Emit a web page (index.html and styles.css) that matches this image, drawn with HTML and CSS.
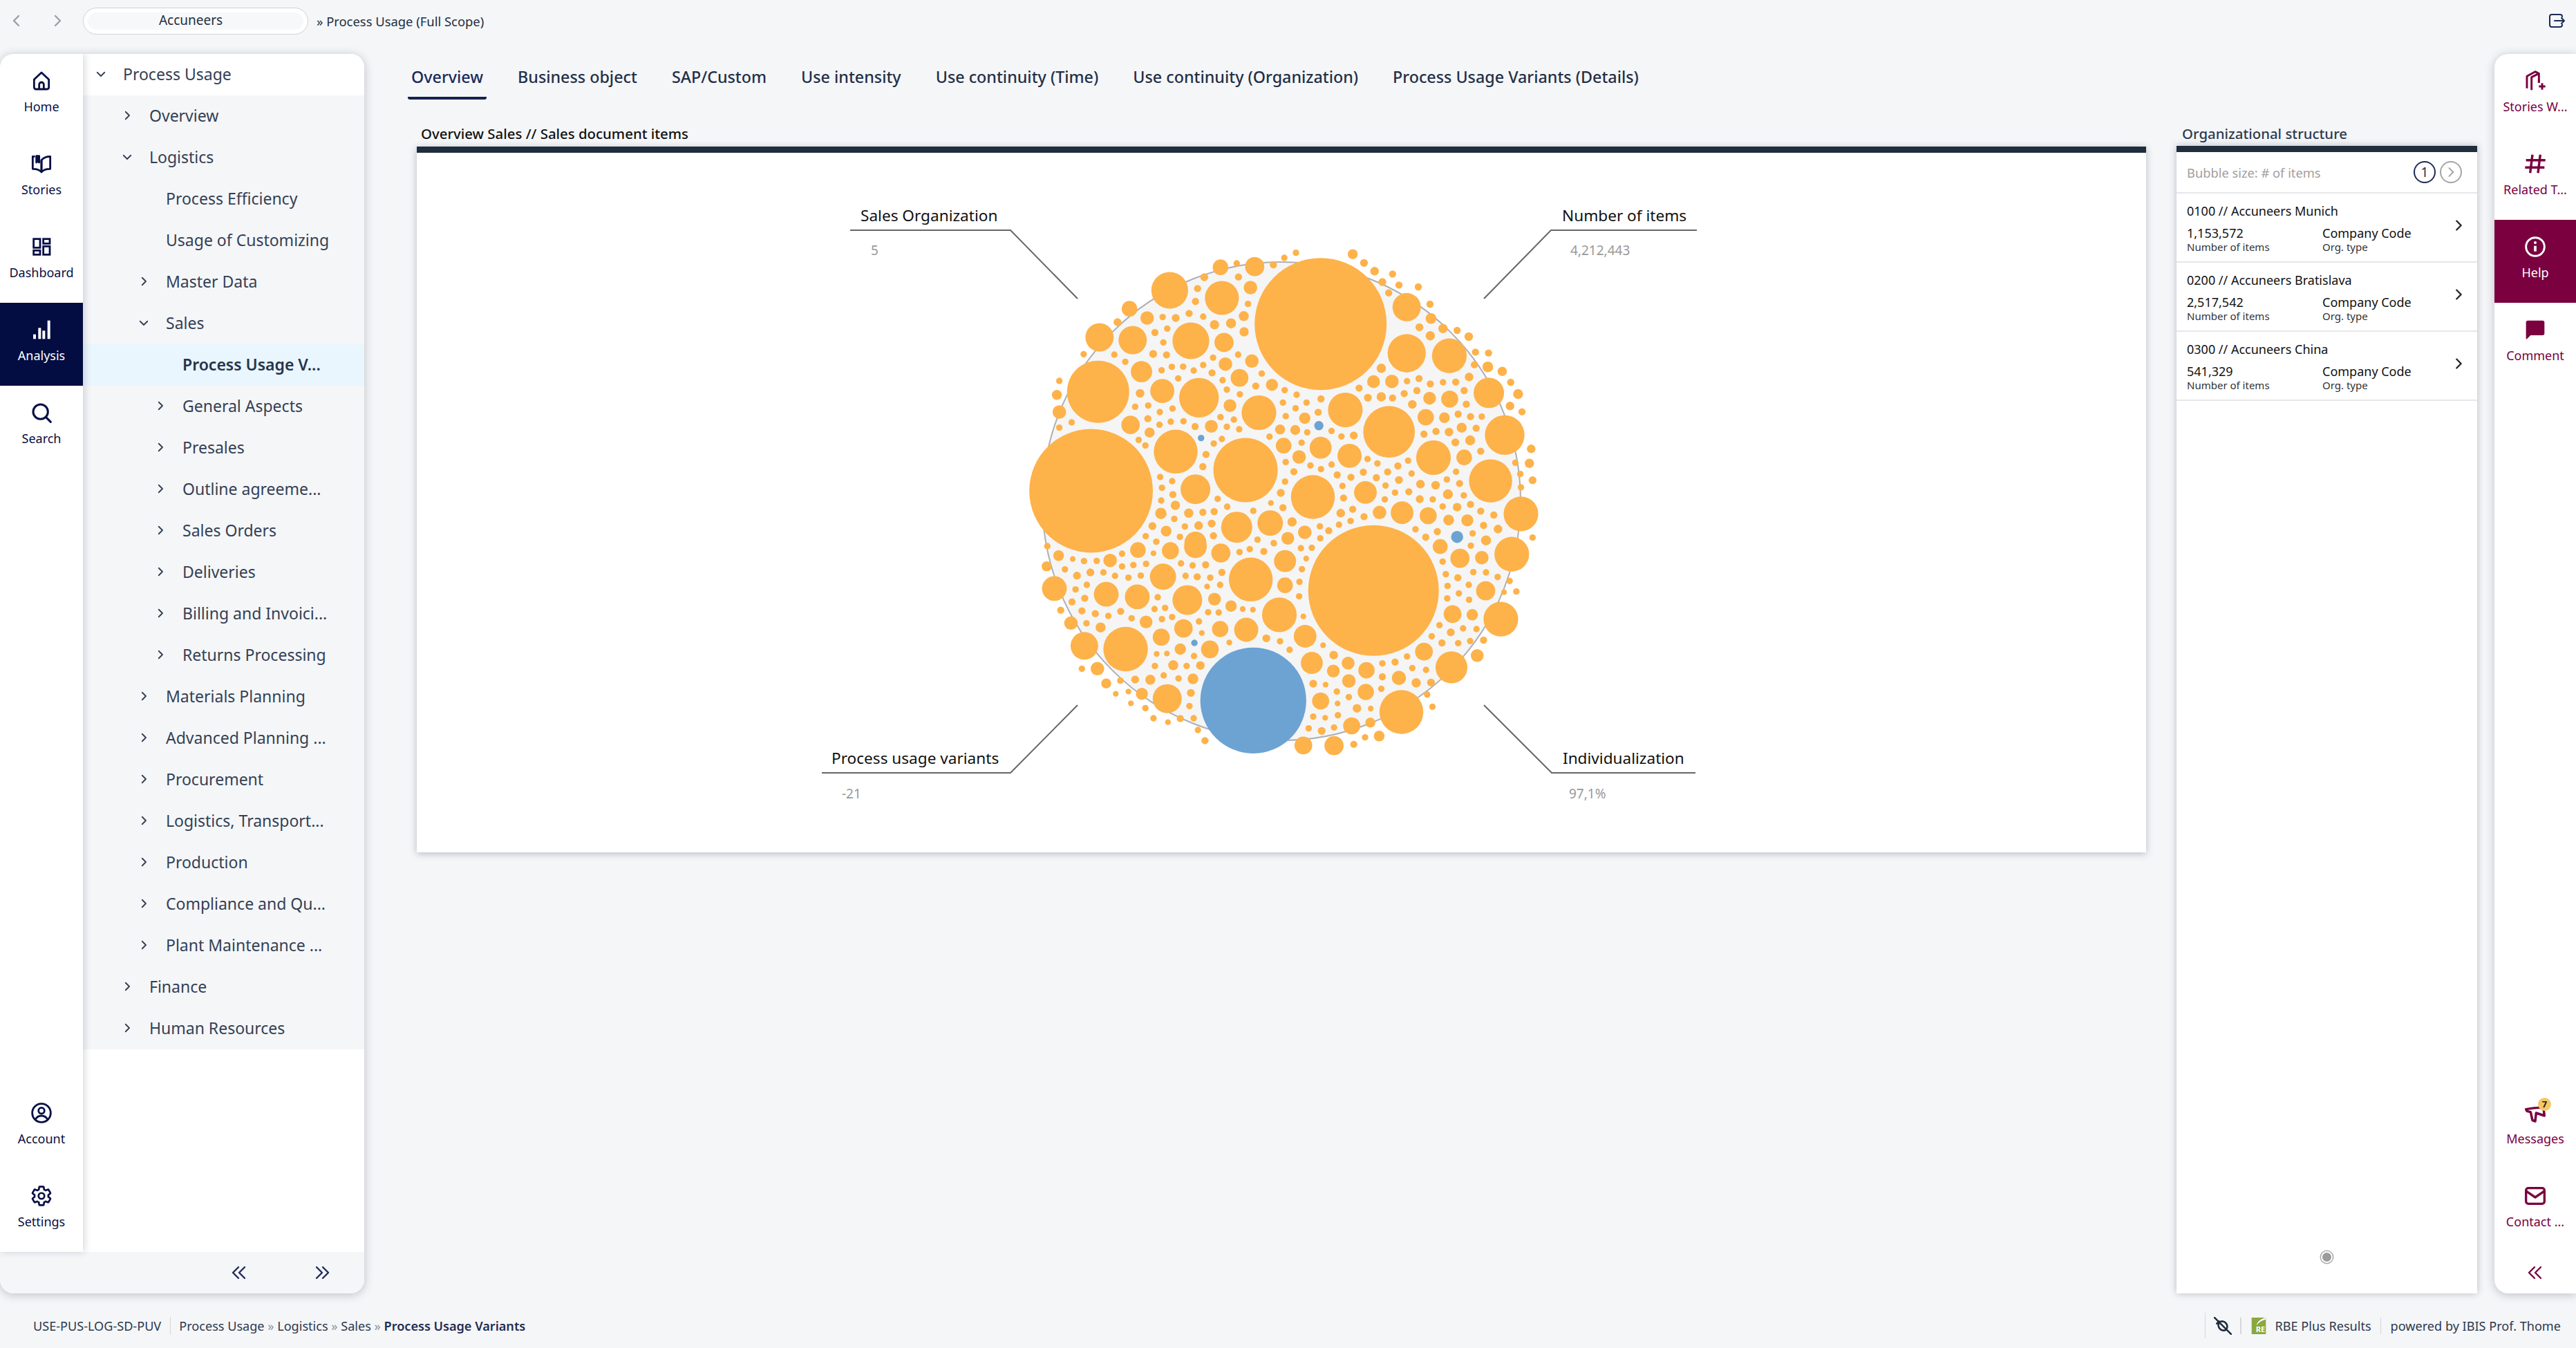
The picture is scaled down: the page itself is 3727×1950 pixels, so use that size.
FILE: index.html
```html
<!DOCTYPE html>
<html lang="en">
<head>
    <meta charset="UTF-8">
    <title>Process Usage Variants</title>
    <link rel="stylesheet" href="styles.css">
</head>
<body>
    <svg class="sprites" width="0" height="0">
        <symbol id="chev-right" viewBox="0 0 24 24"><path d="M9 5l7 7-7 7" fill="none" stroke="currentColor" stroke-width="2.4" stroke-linecap="round" stroke-linejoin="round"/></symbol>
        <symbol id="chev-left" viewBox="0 0 24 24"><path d="M15 5l-7 7 7 7" fill="none" stroke="currentColor" stroke-width="2.4" stroke-linecap="round" stroke-linejoin="round"/></symbol>
        <symbol id="chev-down" viewBox="0 0 24 24"><path d="M5 9l7 7 7-7" fill="none" stroke="currentColor" stroke-width="2.4" stroke-linecap="round" stroke-linejoin="round"/></symbol>
        <symbol id="double-left" viewBox="0 0 24 24"><path d="M11 4l-8 8 8 8M20 4l-8 8 8 8" fill="none" stroke="currentColor" stroke-width="2.4" stroke-linecap="round" stroke-linejoin="round"/></symbol>
        <symbol id="double-right" viewBox="0 0 24 24"><path d="M4 4l8 8-8 8M13 4l8 8-8 8" fill="none" stroke="currentColor" stroke-width="2.4" stroke-linecap="round" stroke-linejoin="round"/></symbol>
    </svg>

    <header class="topbar">
        <svg class="top-chev"><use href="#chev-left"/></svg>
        <svg class="top-chev top-chev-next"><use href="#chev-right"/></svg>
        <div class="client-pill">Accuneers</div>
        <div class="scope">» Process Usage (Full Scope)</div>
        <svg class="logout" viewBox="0 0 24 24" fill="none" stroke="currentColor" stroke-width="2" stroke-linecap="round" stroke-linejoin="round">
            <path d="M20 6.5V6a3 3 0 0 0-3-3H5a3 3 0 0 0-3 3v12a3 3 0 0 0 3 3h12a3 3 0 0 0 3-3v-.5"/>
            <path d="M9 12h14M19 8l4 4-4 4"/>
        </svg>
    </header>

    <main class="main">
        <section class="left-panel">
            <div class="left-body">
                <nav class="rail">
                    <a class="rail-item">
                        <svg class="rail-icon" viewBox="0 0 24 24" fill="none" stroke="currentColor" stroke-width="2.1" stroke-linejoin="round"><path d="M4 10.5 12 3l8 7.5V19a2 2 0 0 1-2 2H6a2 2 0 0 1-2-2z"/><path d="M9.5 21v-5a2.5 2.5 0 0 1 5 0v5"/></svg>
                        <span>Home</span>
                    </a>
                    <a class="rail-item">
                        <svg class="rail-icon" viewBox="0 0 24 24" fill="none" stroke="currentColor" stroke-width="2.1" stroke-linejoin="round"><path d="M12 21C10 18.5 7 17.5 2.5 17.5V4H5M12 21c2-2.500 5-3.500 9.500-3.500V4C17 4 14 5.500 12 8z"/><path d="M12 8v13"/><path d="M6.500 3.500h3v7l-1.500-1.200-1.500 1.200z" fill="currentColor"/></svg>
                        <span>Stories</span>
                    </a>
                    <a class="rail-item">
                        <svg class="rail-icon" viewBox="0 0 24 24" fill="none" stroke="currentColor" stroke-width="2.1"><rect x="3.500" y="3.500" width="7" height="9.500"/><rect x="14" y="3.500" width="7" height="5"/><rect x="3.500" y="16" width="7" height="4.500"/><rect x="14" y="11.500" width="7" height="9"/></svg>
                        <span>Dashboard</span>
                    </a>
                    <a class="rail-item rail-item-active">
                        <svg class="rail-icon" viewBox="0 0 24 24" fill="currentColor"><rect x="3" y="17" width="3" height="5"/><rect x="8.500" y="10" width="3" height="12"/><rect x="13" y="13" width="3" height="9"/><rect x="18.500" y="2" width="3" height="20"/></svg>
                        <span>Analysis</span>
                    </a>
                    <a class="rail-item">
                        <svg class="rail-icon" viewBox="0 0 24 24" fill="none" stroke="currentColor" stroke-width="2.300" stroke-linecap="round"><circle cx="11" cy="11" r="8"/><path d="M16.800 16.800 22 22"/></svg>
                        <span>Search</span>
                    </a>
                    <div class="rail-spacer"></div>
                    <a class="rail-item">
                        <svg class="rail-icon" viewBox="0 0 24 24" fill="none" stroke="currentColor" stroke-width="2.100"><circle cx="12" cy="12" r="10"/><circle cx="12" cy="9.500" r="3.200"/><path d="M5.500 19c1.500-3 4-4 6.500-4s5 1 6.500 4"/></svg>
                        <span>Account</span>
                    </a>
                    <a class="rail-item">
                        <svg class="rail-icon" viewBox="0 0 24 24" fill="none" stroke="currentColor" stroke-width="2"><path d="M19.430 12.980c.04-.32.07-.64.07-.98s-.03-.66-.07-.98l2.110-1.650c.19-.15.24-.42.12-.64l-2-3.460c-.12-.22-.39-.3-.61-.22l-2.490 1c-.52-.4-1.080-.73-1.690-.98l-.38-2.650C14.460 2.180 14.250 2 14 2h-4c-.25 0-.46.18-.49.42l-.38 2.650c-.61.25-1.170.59-1.690.98l-2.490-1c-.23-.09-.49 0-.61.22l-2 3.460c-.13.22-.07.49.12.64l2.110 1.650c-.04.32-.07.65-.07.98s.03.66.07.98l-2.110 1.650c-.19.15-.24.42-.12.64l2 3.460c.12.22.39.3.61.22l2.490-1c.52.4 1.080.73 1.690.98l.38 2.650c.03.24.24.42.49.42h4c.25 0 .46-.18.49-.42l.38-2.650c.61-.25 1.170-.59 1.690-.98l2.490 1c.23.09.49 0 .61-.22l2-3.460c.12-.22.07-.49-.12-.64l-2.110-1.650z"/><circle cx="12" cy="12" r="3.200"/></svg>
                        <span>Settings</span>
                    </a>
                </nav>

                <div class="tree-wrap">
                    <ul class="tree">
                        <li class="tree-row tree-root lvl0"><svg class="tree-chev"><use href="#chev-down"/></svg>Process Usage</li>
                        <li class="tree-row lvl1"><svg class="tree-chev"><use href="#chev-right"/></svg>Overview</li>
                        <li class="tree-row lvl1"><svg class="tree-chev"><use href="#chev-down"/></svg>Logistics</li>
                        <li class="tree-row lvl2">Process Efficiency</li>
                        <li class="tree-row lvl2">Usage of Customizing</li>
                        <li class="tree-row lvl2"><svg class="tree-chev"><use href="#chev-right"/></svg>Master Data</li>
                        <li class="tree-row lvl2"><svg class="tree-chev"><use href="#chev-down"/></svg>Sales</li>
                        <li class="tree-row lvl3 tree-selected">Process Usage V...</li>
                        <li class="tree-row lvl3"><svg class="tree-chev"><use href="#chev-right"/></svg>General Aspects</li>
                        <li class="tree-row lvl3"><svg class="tree-chev"><use href="#chev-right"/></svg>Presales</li>
                        <li class="tree-row lvl3"><svg class="tree-chev"><use href="#chev-right"/></svg>Outline agreeme...</li>
                        <li class="tree-row lvl3"><svg class="tree-chev"><use href="#chev-right"/></svg>Sales Orders</li>
                        <li class="tree-row lvl3"><svg class="tree-chev"><use href="#chev-right"/></svg>Deliveries</li>
                        <li class="tree-row lvl3"><svg class="tree-chev"><use href="#chev-right"/></svg>Billing and Invoici...</li>
                        <li class="tree-row lvl3"><svg class="tree-chev"><use href="#chev-right"/></svg>Returns Processing</li>
                        <li class="tree-row lvl2"><svg class="tree-chev"><use href="#chev-right"/></svg>Materials Planning</li>
                        <li class="tree-row lvl2"><svg class="tree-chev"><use href="#chev-right"/></svg>Advanced Planning ...</li>
                        <li class="tree-row lvl2"><svg class="tree-chev"><use href="#chev-right"/></svg>Procurement</li>
                        <li class="tree-row lvl2"><svg class="tree-chev"><use href="#chev-right"/></svg>Logistics, Transport...</li>
                        <li class="tree-row lvl2"><svg class="tree-chev"><use href="#chev-right"/></svg>Production</li>
                        <li class="tree-row lvl2"><svg class="tree-chev"><use href="#chev-right"/></svg>Compliance and Qu...</li>
                        <li class="tree-row lvl2"><svg class="tree-chev"><use href="#chev-right"/></svg>Plant Maintenance ...</li>
                        <li class="tree-row lvl1"><svg class="tree-chev"><use href="#chev-right"/></svg>Finance</li>
                        <li class="tree-row lvl1"><svg class="tree-chev"><use href="#chev-right"/></svg>Human Resources</li>
                    </ul>
                </div>
            </div>
            <div class="left-foot">
                <svg class="foot-chev"><use href="#double-left"/></svg>
                <svg class="foot-chev"><use href="#double-right"/></svg>
            </div>
        </section>

        <section class="work">
            <div class="tabs">
                <a class="tab tab-active">Overview</a>
                <a class="tab">Business object</a>
                <a class="tab">SAP/Custom</a>
                <a class="tab">Use intensity</a>
                <a class="tab">Use continuity (Time)</a>
                <a class="tab">Use continuity (Organization)</a>
                <a class="tab">Process Usage Variants (Details)</a>
            </div>

            <div class="panes">
                <div class="chart-pane">
                    <div class="chart-title">Overview Sales // Sales document items</div>
                    <div class="chart-card">
                        <svg class="chart" id="chart" viewBox="603 221 2502 1012" width="2502" height="1012">
                            <circle class="bubble-bg" cx="1854" cy="725" r="346"/>
                            <g id="bubbles"></g>
                            <polyline class="callout" points="1230,333 1462,333 1559,432"/>
                            <polyline class="callout" points="2455,333 2244,333 2147,432"/>
                            <polyline class="callout" points="1189,1118 1462,1118 1559,1020"/>
                            <polyline class="callout" points="2453,1118 2245,1118 2147,1020"/>
                            <text class="kpi-name" x="1245" y="320">Sales Organization</text>
                            <text class="kpi-value" x="1260" y="369">5</text>
                            <text class="kpi-name" x="2260" y="320">Number of items</text>
                            <text class="kpi-value" x="2272" y="369">4,212,443</text>
                            <text class="kpi-name" x="1203" y="1105">Process usage variants</text>
                            <text class="kpi-value" x="1218" y="1155">-21</text>
                            <text class="kpi-name" x="2261" y="1105">Individualization</text>
                            <text class="kpi-value" x="2270" y="1155">97,1%</text>
                        </svg>
                    </div>
                </div>

                <div class="org-pane">
                    <div class="org-title">Organizational structure</div>
                    <div class="org-card">
                        <div class="org-head">
                            <span class="org-hint">Bubble size: # of items</span>
                            <span class="page-dot page-dot-current">1</span>
                            <span class="page-dot"><svg><use href="#chev-right"/></svg></span>
                        </div>
                        <div class="org-row">
                            <div class="org-info">
                                <div class="org-name">0100 // Accuneers Munich</div>
                                <div class="org-cols">
                                    <div><div class="org-val">1,153,572</div><div class="org-lbl">Number of items</div></div>
                                    <div><div class="org-val">Company Code</div><div class="org-lbl">Org. type</div></div>
                                </div>
                            </div>
                            <svg class="org-chev"><use href="#chev-right"/></svg>
                        </div>
                        <div class="org-row">
                            <div class="org-info">
                                <div class="org-name">0200 // Accuneers Bratislava</div>
                                <div class="org-cols">
                                    <div><div class="org-val">2,517,542</div><div class="org-lbl">Number of items</div></div>
                                    <div><div class="org-val">Company Code</div><div class="org-lbl">Org. type</div></div>
                                </div>
                            </div>
                            <svg class="org-chev"><use href="#chev-right"/></svg>
                        </div>
                        <div class="org-row">
                            <div class="org-info">
                                <div class="org-name">0300 // Accuneers China</div>
                                <div class="org-cols">
                                    <div><div class="org-val">541,329</div><div class="org-lbl">Number of items</div></div>
                                    <div><div class="org-val">Company Code</div><div class="org-lbl">Org. type</div></div>
                                </div>
                            </div>
                            <svg class="org-chev"><use href="#chev-right"/></svg>
                        </div>
                        <div class="org-pager"><span class="radio"></span></div>
                    </div>
                </div>
            </div>
        </section>

        <aside class="right-rail">
            <a class="rail-item">
                <svg class="rail-icon" viewBox="0 0 24 24" fill="none" stroke="currentColor" stroke-width="2.200" stroke-linejoin="round"><path d="M3 20V7l9-5 4 2v10"/><path d="M8 22V8l8-4"/><path d="M16 14v-3M16 18h7M19.500 14.500v7"/></svg>
                <span>Stories W...</span>
            </a>
            <a class="rail-item">
                <svg class="rail-icon" viewBox="0 0 24 24" fill="none" stroke="currentColor" stroke-width="2.600"><path d="M9 2 6.500 22M17.500 2 15 22M2 8h21M1 16h21"/></svg>
                <span>Related T...</span>
            </a>
            <a class="rail-item rail-item-help">
                <svg class="rail-icon" viewBox="0 0 24 24" fill="none" stroke="currentColor" stroke-width="2.200"><circle cx="12" cy="12" r="10"/><path d="M12 11v6" stroke-width="2.800"/><circle cx="12" cy="7.500" r="1.500" fill="currentColor" stroke="none"/></svg>
                <span>Help</span>
            </a>
            <a class="rail-item">
                <svg class="rail-icon" viewBox="0 0 24 24" fill="currentColor"><path d="M4 2h16a2 2 0 0 1 2 2v12a2 2 0 0 1-2 2H7l-4 4a.6.6 0 0 1-1-.4V4a2 2 0 0 1 2-2z"/></svg>
                <span>Comment</span>
            </a>
            <div class="rail-spacer"></div>
            <a class="rail-item">
                <span class="icon-badge-wrap">
                    <svg class="rail-icon" viewBox="0 0 24 24" fill="none" stroke="currentColor" stroke-width="2.600" stroke-linejoin="round"><path d="M2 8c6-1 13-3 19-1l1 8-9-3-1 9-3-1-2-9-4-1z"/></svg>
                    <span class="badge">7</span>
                </span>
                <span>Messages</span>
            </a>
            <a class="rail-item">
                <svg class="rail-icon" viewBox="0 0 24 24" fill="none" stroke="currentColor" stroke-width="2.500" stroke-linejoin="round"><rect x="2" y="3.500" width="20" height="17" rx="2.500"/><path d="M2.500 7 12 13.500 21.500 7"/></svg>
                <span>Contact ...</span>
            </a>
            <div class="rail-collapse"><svg class="foot-chev"><use href="#double-left"/></svg></div>
        </aside>
    </main>

    <footer class="footer">
        <span class="foot-code">USE-PUS-LOG-SD-PUV</span>
        <span class="foot-crumbs">Process Usage <i>»</i> Logistics <i>»</i> Sales <i>»</i> <b>Process Usage Variants</b></span>
        <span class="foot-right">
            <svg class="plug" viewBox="0 0 24 24" fill="none" stroke="currentColor" stroke-width="2.400" stroke-linecap="round"><path d="M1 1l22 22"/><ellipse cx="12" cy="12" rx="5.500" ry="6.500" transform="rotate(-40 12 12)"/><path d="M4 9l3-3"/></svg>
            <span class="foot-logo-wrap">
                <svg class="re-logo" viewBox="0 0 24 28"><rect width="24" height="28" fill="#8aa83f"/><path d="M8 13C10 7 15 2 24 0v3c-7 2-12 5-16 10z" fill="#fff"/><text x="7" y="25" class="re-text">RE</text></svg>
                RBE Plus Results
            </span>
            <span class="foot-powered">powered by IBIS Prof. Thome</span>
        </span>
    </footer>

    <script src="script.js"></script>
</body>
</html>
```

FILE: styles.css
```css
* {
    box-sizing: border-box;
}

html, body {
    margin: 0;
    height: 100%;
}

body {
    display: flex;
    flex-direction: column;
    height: 1950px;
    overflow: hidden;
    background-color: #f5f6f8;
    color: #2c3a4e;
    font-family: "Noto Sans", Arial, sans-serif;
}

a {
    color: inherit;
    text-decoration: none;
}

.sprites {
    position: absolute;
}

/* top bar */
.topbar {
    display: flex;
    align-items: center;
    height: 78px;
    padding-bottom: 18px;
    flex-shrink: 0;
}

.top-chev {
    width: 24px;
    height: 26px;
    margin-left: 12px;
    color: #9aa0a8;
}

.top-chev-next {
    margin-left: 35px;
    margin-right: 25px;
}

.client-pill {
    width: 326px;
    height: 39px;
    padding-right: 14px;
    line-height: 35px;
    text-align: center;
    font-size: 19px;
    color: #222e3f;
    background-color: #f7f8fa;
    border: 1.5px solid #d2d4d8;
    border-radius: 20px;
    box-shadow: inset 0 0 0 6px #fff;
}

.scope {
    margin-left: 12px;
    font-size: 18.4px;
    color: #222e3f;
}

.logout {
    width: 26px;
    height: 24px;
    margin-left: auto;
    margin-right: 15px;
    color: #1c2b55;
}

/* main area */
.main {
    display: flex;
    height: 1793px;
    flex-shrink: 0;
}

.left-panel {
    display: flex;
    flex-direction: column;
    width: 527px;
    flex-shrink: 0;
    background-color: #fff;
    border-radius: 20px;
    box-shadow: 0 2px 14px rgba(40, 50, 70, 0.28);
    overflow: hidden;
}

.left-body {
    display: flex;
    flex: 1;
}

.rail {
    display: flex;
    flex-direction: column;
    width: 120px;
    flex-shrink: 0;
    background-color: #fff;
    color: #070f45;
    box-shadow: 2px 0 10px rgba(40, 50, 70, 0.2);
    z-index: 1;
}

.rail-spacer {
    flex: 1;
}

.rail-item {
    display: flex;
    flex-direction: column;
    align-items: center;
    height: 120px;
    padding-top: 23px;
    font-size: 18px;
    line-height: 26px;
    white-space: nowrap;
}

.rail-icon {
    width: 32px;
    height: 32px;
    margin-bottom: 8px;
}

.rail-item-active {
    background-color: #030d42;
    color: #fff;
}

.tree-wrap {
    flex: 1;
    background-color: #fff;
}

.tree {
    list-style: none;
    margin: 0;
    padding: 0;
    background-color: #f5f6f8;
}

.tree-row {
    display: flex;
    align-items: center;
    position: relative;
    height: 60px;
    padding-bottom: 2px;
    font-size: 23px;
    color: #334155;
    white-space: nowrap;
}

.tree-root {
    background-color: #fff;
}

.lvl0 { padding-left: 58px; }
.lvl1 { padding-left: 96px; }
.lvl2 { padding-left: 120px; }
.lvl3 { padding-left: 144px; }

.tree-chev {
    width: 18px;
    height: 18px;
    margin-left: -41px;
    margin-right: 23px;
    color: #2f3e52;
}

.tree-selected {
    background-color: #eaf6fe;
    font-weight: 600;
    color: #26344a;
}

.left-foot {
    display: flex;
    justify-content: flex-end;
    align-items: center;
    gap: 96px;
    height: 60px;
    padding-right: 49px;
    background-color: #f5f6f8;
    color: #1e2b58;
}

.foot-chev {
    width: 24px;
    height: 24px;
}

/* tabs and content */
.work {
    display: flex;
    flex-direction: column;
    flex: 1;
    min-width: 0;
}

.tabs {
    display: flex;
    gap: 40px;
    height: 66px;
    margin-left: 63px;
}

.tab {
    height: 66px;
    padding: 15px 5px 0;
    font-size: 23.3px;
    font-weight: 500;
    line-height: 36px;
    color: #233047;
    white-space: nowrap;
    border-bottom: 4px solid transparent;
    border-radius: 0 0 3px 3px;
}

.tab-active {
    color: #1c2a5a;
    border-bottom-color: #17224f;
}

.panes {
    display: flex;
    gap: 44px;
    flex: 1;
    margin-left: 76px;
}

.chart-pane {
    width: 2502px;
    flex-shrink: 0;
}

.chart-title {
    height: 68px;
    padding: 36px 0 0 6px;
    font-size: 20.4px;
    font-weight: 500;
    line-height: 26px;
    color: #111;
}

.chart-card {
    background-color: #fff;
    border-top: 9px solid #1f2d3d;
    box-shadow: 0 2px 10px rgba(40, 50, 70, 0.3);
}

.chart {
    display: block;
}

.bubble-bg {
    fill: #f5f5f5;
    stroke: #adb0b5;
    stroke-width: 2;
}

.bubble {
    fill: #feb24a;
}

.bubble-blue {
    fill: #6ca3d3;
}

.callout {
    fill: none;
    stroke: #666;
    stroke-width: 2;
}

.kpi-name {
    font-size: 22.6px;
    fill: #111;
}

.kpi-value {
    font-size: 19px;
    fill: #999;
}

.org-pane {
    display: flex;
    flex-direction: column;
    width: 435px;
    flex-shrink: 0;
}

.org-title {
    height: 67px;
    padding: 36px 0 0 8px;
    font-size: 20.4px;
    font-weight: 500;
    line-height: 26px;
    color: #2c3a4e;
}

.org-card {
    display: flex;
    flex-direction: column;
    flex: 1;
    background-color: #fff;
    border-top: 9px solid #1f2d3d;
    box-shadow: 0 0 10px rgba(40, 50, 70, 0.3);
}

.org-head {
    display: flex;
    align-items: center;
    gap: 6px;
    height: 60px;
    padding: 0 22px 0 15px;
    border-bottom: 2px solid #e6e7ea;
}

.org-hint {
    margin-right: auto;
    font-size: 18.3px;
    color: #a0a0a0;
}

.page-dot {
    display: flex;
    align-items: center;
    justify-content: center;
    width: 32px;
    height: 32px;
    font-size: 19px;
    color: #1f2a55;
    border: 2px solid #1f2a55;
    border-radius: 50%;
}

.page-dot:last-child {
    color: #a5a5a5;
    border-color: #a5a5a5;
}

.page-dot svg {
    width: 20px;
    height: 20px;
}

.page-dot-current {
    margin-right: 0;
}

.org-row {
    display: flex;
    align-items: center;
    height: 100px;
    padding: 0 16px 0 15px;
    border-bottom: 2px solid #e6e7ea;
    color: #111;
}

.org-info {
    flex: 1;
}

.org-name {
    height: 33px;
    font-size: 18px;
    line-height: 24px;
}

.org-cols {
    display: grid;
    grid-template-columns: 196px 1fr;
}

.org-val {
    font-size: 18px;
    line-height: 22px;
}

.org-lbl {
    font-size: 15px;
    line-height: 18px;
    color: #333;
}

.org-chev {
    width: 22px;
    height: 22px;
    margin-bottom: 6px;
    color: #222;
}

.org-pager {
    display: flex;
    justify-content: center;
    margin-top: auto;
    padding-bottom: 44px;
}

.radio {
    width: 17px;
    height: 17px;
    background-color: #9a9a9a;
    border: 2px solid #fff;
    border-radius: 50%;
    box-shadow: 0 0 0 1.5px #aaa;
}

/* right rail */
.right-rail {
    display: flex;
    flex-direction: column;
    width: 118px;
    flex-shrink: 0;
    margin-left: 25px;
    background-color: #fff;
    color: #7a003f;
    border-radius: 20px 0 0 20px;
    box-shadow: 0 2px 14px rgba(40, 50, 70, 0.28);
    overflow: hidden;
}

.rail-item-help {
    background-color: #7a003f;
    color: #fff;
}

.icon-badge-wrap {
    position: relative;
    display: block;
    height: 40px;
}

.badge {
    position: absolute;
    top: -6px;
    right: -7px;
    width: 19px;
    height: 19px;
    font-size: 13px;
    font-weight: 700;
    line-height: 19px;
    text-align: center;
    color: #222;
    background-color: #f5c867;
    border-radius: 50%;
}

.rail-collapse {
    display: flex;
    justify-content: center;
    align-items: center;
    height: 60px;
}

/* footer */
.footer {
    display: flex;
    align-items: center;
    flex: 1;
    padding: 14px 22px 0 48px;
    font-size: 18.1px;
    color: #2c3a4e;
}

.foot-code {
    padding-right: 13px;
    border-right: 1px solid #d5d7db;
    line-height: 26px;
}

.foot-crumbs {
    padding-left: 12px;
}

.foot-crumbs i {
    font-style: normal;
    color: #8a94a3;
}

.foot-crumbs b {
    font-weight: 600;
    color: #1f2d50;
}

.foot-right {
    display: flex;
    align-items: center;
    margin-left: auto;
    height: 37px;
    border-left: 1px solid #d5d7db;
}

.plug {
    width: 26px;
    height: 26px;
    margin: 0 12px;
    color: #1f2d3d;
}

.foot-logo-wrap {
    display: flex;
    align-items: center;
    gap: 11px;
    height: 24px;
    padding: 0 13px;
    border-left: 2px solid #d5d7db;
    border-right: 1px solid #d5d7db;
}

.re-logo {
    width: 24px;
    height: 24px;
}

.re-text {
    font-size: 13px;
    font-weight: 700;
    fill: #fff;
}

.foot-powered {
    padding-left: 14px;
}
```

FILE: script.js
```js
// bubble positions, read off the chart at 1.96 / 3 scale (x, y, r)
const SCALE_X = 1.96;
const SCALE_Y = 3;
const ORIGIN_X = 1450;

const upper = [
    [903,386,186],[252,1110,174],[272,680,87],[475,240,51],[623,273,47],[276,444,39],[370,456,39],[535,459,51],[629,466,26],
    [1147,313,39],[1147,513,53],[1268,524,48],[1380,685,42],[1425,868,55],[1385,1067,60],[1471,1210,48],[973,759,48],[1097,854,72],
    [1223,966,48],[1310,965,21],[985,958,33],[903,923,30],[798,914,21],[728,771,48],[690,1020,90],[492,940,61],[558,706,55],
    [454,677,33],[395,593,29],[364,824,25],[548,1103,41],[881,1137,61],[1030,1117,31],[1134,1205,31],[1208,1218,23],[1070,1204,18],
    [665,1268,43],[760,1250,35],[858,1290,18],[810,1316,17],[548,1335,30],[646,740,17],[673,620,24],[633,560,18],[708,547,18],
    [704,228,18],[619,140,21],[716,137,26],[361,320,21],[411,360,18],[1201,791,22],[1254,793,14],[1269,712,23],[1212,708,17],
    [1105,635,18],[1053,636,17],[1075,578,12],[1377,572,14],[1216,362,14],[1250,406,12],[1214,437,12],[1183,400,10],[685,352,13],
    [649,383,13],[602,389,12],[686,420,12],[593,830,17],[858,795,15],[842,963,18],[788,844,13],[831,846,13],[765,650,16],[1163,735,11],
    [1075,702,12],[1037,706,10],[418,857,13],[162,768,18],[155,694,13],
    [994,83,13],[1026,121,10],[1056,157,11],[1107,169,9],[1078,204,10],[1125,217,9],[1180,225,9],[1096,251,9],[1213,300,9],[1290,414,9],
    [1323,441,11],[1342,508,9],[1379,512,9],[1418,592,12],[1442,639,9],[1463,690,13],[1440,742,11],[1474,767,9],[1339,563,9],[1324,616,11],
    [1286,638,9],[1250,639,8],[1214,646,9],[1182,623,9],[1148,634,8],[1012,664,9],[1140,688,9],[1176,675,9],[1107,707,9],[1310,675,9],
    [1316,734,9],[1293,777,9],[1328,788,9],[1360,788,8],[1303,836,13],[1344,838,9],[1267,855,11],[1230,852,9],[1196,864,9],[1327,891,13],
    [1285,900,10],[1357,938,9],[1500,928,11],[1495,991,12],[1504,1064,10],[1455,988,8],[1469,1037,8],[1471,1095,8],[1504,1313,8],
    [833,77,8],[800,99,8],[769,129,9],[665,123,8],[573,183,10],[670,182,9],[554,232,9],[548,288,9],[697,299,8],[570,354,8],[530,340,9],
    [492,360,10],[455,356,8],[327,378,10],[433,423,9],[468,406,8],[457,466,8],[428,516,10],[466,520,9],[318,519,8],[231,517,8],[349,550,8],
    [452,587,8],[481,572,8],[513,571,8],[543,588,8],[570,564,8],[595,598,9],[598,532,8],[669,519,8],[736,601,8],[625,630,8],[499,622,8],
    [391,687,11],[637,671,8],[674,691,8],[719,655,9],[801,673,8],[835,693,8],[904,711,9],[796,727,8],[863,727,8],[832,752,8],[896,769,9],
    [804,786,8],[377,745,8],[414,740,8],[447,768,8],[483,753,8],[413,797,9],[478,810,8],[514,808,8],[446,823,8],[547,831,9],[619,790,8],
    [657,801,8],[637,832,8],[672,843,8],[162,633,8],[197,813,8],[162,836,8],[387,889,8],[406,913,8],[600,905,8],[623,885,8],[578,952,9],
    [569,1005,9],[758,875,8],[865,856,8],[849,901,8],[934,850,8],[962,874,8],[997,870,10],[804,985,8],[874,1000,8],[934,996,8],[904,1016,8],
    [827,1027,9],[802,1070,8],[790,1119,10],[1036,972,8],[1064,991,8],[1122,1002,9],[1151,979,8],[1024,1029,9],[950,1041,9],[989,1051,9],
    [1061,1053,9],[1093,1028,9],[1125,1063,10],[1161,1035,8],[965,1089,8],[968,1141,9],[1087,1087,8],[1186,1081,11],[1229,1086,11],[1261,1061,8],
    [1297,1078,9],[1287,1027,8],[1114,1118,8],[1153,1114,9],[1264,1125,13],[1184,1146,10],[1221,1147,8],[1309,1130,8],[1085,1147,8],[1249,1178,8],
    [1290,1181,11],[1328,1169,9],[1357,1198,9],[1394,1215,9],[1266,1237,14],[1319,1238,16],[1365,1260,9],[1334,1295,8],[1172,1277,8],[1234,1287,9],
    [1201,1311,9],[1406,1276,11],[1372,1325,13],[448,1050,8],[482,1068,8],[453,1097,8],[484,1126,9],[451,1152,8],[491,1173,12],[611,1145,8],
    [638,1179,8],[762,1163,7],[796,1183,9],[712,1197,8],[450,1208,15],[488,1232,8],[529,1207,12],[569,1203,9],[601,1200,9],[518,1265,8],
    [557,1261,11],[594,1252,10],[426,1263,10],[465,1285,14],[504,1310,8],[407,1307,8],[437,1331,8],[599,1305,9],[724,1322,8],[770,1337,8],
    [822,1245,12],[901,1264,8],[926,1283,9],[902,1316,8],[960,1207,11],[994,1190,9],[988,1241,8],[955,1257,8],[1026,1222,9]
];

const lower = [
    [1053,403,184],[705,355,61],[456,343,36],[525,444,41],[786,508,48],[802,275,30],[802,380,21],[148,394,34],[295,419,34],[383,430,34],
    [350,657,62],[233,643,38],[468,872,40],[451,605,23],[514,567,25],[618,570,22],[692,573,33],[602,440,17],[649,470,15],[859,601,31],
    [878,717,30],[1196,668,24],[1274,736,44],[1347,685,17],[1414,527,48],[1445,245,48],[1371,404,26],[1298,263,26],[1277,505,24],[1333,508,15],
    [1132,930,61],[1031,843,22],[1125,782,19],[1033,749,22],[939,752,17],[983,795,18],[981,718,17],[903,882,23],[991,990,23],[854,1075,24],
    [941,1076,26],[1069,1034,14],[1360,260,18],[1242,212,20],[589,658,24],[505,657,15],[408,539,17],[548,213,31],[620,240,26],[477,230,23],
    [385,227,21],[306,272,18],[160,251,14],[126,298,13],[195,544,18],[270,742,18],[295,806,13],[396,851,16],[420,790,13],[377,789,10],[541,786,14],
    [128,210,8],[200,266,7],[232,275,8],[268,274,8],[340,243,8],[429,241,7],[178,311,8],[212,338,10],[250,324,10],[287,324,8],[320,339,8],
    [340,298,8],[372,292,8],[408,287,8],[358,347,8],[393,338,8],[208,398,8],[240,378,8],[234,436,9],[198,452,9],[166,488,9],[226,491,9],
    [264,503,9],[301,513,8],[336,493,9],[239,545,8],[279,563,13],[367,523,8],[432,483,8],[462,478,8],[453,527,8],[482,518,8],[441,432,8],
    [507,285,8],[540,294,8],[577,291,9],[623,324,9],[520,339,8],[553,343,9],[590,347,8],[581,385,7],[618,378,8],[584,497,8],[614,498,8],
    [682,483,7],[711,486,7],[558,537,8],[566,587,7],[644,628,7],[749,610,10],[788,623,8],[815,660,8],[673,236,8],[702,223,8],[742,233,9],
    [771,199,7],[847,219,8],[878,217,8],[862,264,7],[850,310,8],[843,365,8],[842,428,8],[854,515,7],[910,640,7],[940,683,11],[1078,719,8],
    [1114,713,9],[1148,689,8],[1163,739,8],[1202,747,8],[1218,601,8],[1247,630,9],[1293,631,8],[1327,622,8],[1365,618,9],[1240,553,8],
    [1272,584,10],[1307,567,8],[1345,570,8],[1249,277,8],[1258,332,8],[1292,347,9],[1263,383,8],[1323,378,8],[1295,415,8],[1262,437,8],
    [1324,443,8],[1336,323,8],[1372,324,8],[1405,344,8],[1439,361,8],[1423,410,7],[1458,407,8],[1329,208,8],
    [438,678,7],[467,676,7],[544,687,8],[433,730,8],[485,727,13],[523,730,8],[562,728,11],[458,771,8],[500,784,8],[335,794,8],[322,851,7],
    [358,841,7],[365,892,7],[406,913,8],[429,957,8],[470,974,7],[505,958,9],[543,957,8],[535,847,10],[531,904,8],[555,1008,8],[575,1054,9],
    [226,742,8],[882,807,10],[917,811,7],[949,841,8],[983,865,8],[951,893,7],[882,950,8],[916,955,7],[952,944,8],[869,1001,8],[906,1012,10],
    [941,997,8],[1006,914,11],[1045,915,7],[1044,976,13],[997,1070,9],[1029,1040,8],[1075,829,8],[1078,777,9],[1174,803,12],[1216,802,10],
    [1205,854,8],[1220,907,8]
];

// the blue ones are the selected sales org
const blueUpper = [[564,881,8],[898,827,12],[1290,1310,16]];
const blueLower = [[712,880,149],[545,630,8]];

const group = document.getElementById('bubbles');

function addBubbles(list, originY, className) {
    list.forEach(b => {
        const c = document.createElementNS('http://www.w3.org/2000/svg', 'circle');
        c.setAttribute('cx', ORIGIN_X + b[0] / SCALE_X);
        c.setAttribute('cy', originY + b[1] / SCALE_Y);
        c.setAttribute('r', b[2] / SCALE_X + 0.6);
        c.setAttribute('class', className);
        group.appendChild(c);
    });
}

addBubbles(upper, 340, 'bubble');
addBubbles(lower, 720, 'bubble');
addBubbles(blueUpper, 340, 'bubble-blue');
addBubbles(blueLower, 720, 'bubble-blue');
```
